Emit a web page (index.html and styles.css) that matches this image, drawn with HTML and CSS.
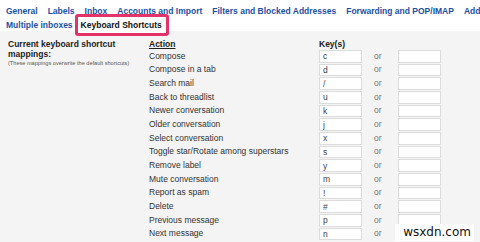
FILE: index.html
```html
<!DOCTYPE html>
<html lang="en">

<head>
    <meta charset="utf-8">
    <meta name="viewport" content="width=device-width, initial-scale=1.0">
    <title>Settings - Keyboard Shortcuts</title>

    <link rel="stylesheet" href="styles.css">

</head>

<body>

    <header class="tabs">
        <nav class="tabrow">
            <a href="#">General</a>
            <a href="#">Labels</a>
            <a href="#">Inbox</a>
            <a href="#">Accounts and Import</a>
            <a href="#">Filters and Blocked Addresses</a>
            <a href="#">Forwarding and POP/IMAP</a>
            <a href="#">Add-ons</a>
        </nav>
        <nav class="tabrow">
            <a href="#">Multiple inboxes</a>
            <span class="valgt">Keyboard Shortcuts</span>
        </nav>
    </header>

    <main class="settings">
        <div class="intro">
            <h2>Current keyboard shortcut mappings:</h2>
            <p class="note">(These mappings overwrite the default shortcuts)</p>
        </div>

        <div id="liste" class="mapping">
            <span class="head action">Action</span>
            <span class="head keys">Key(s)</span>
        </div>
    </main>

    <div class="watermark">wsxdn.com</div>

    <script>
        let genveje = [
            ["Compose", "c"],
            ["Compose in a tab", "d"],
            ["Search mail", "/"],
            ["Back to threadlist", "u"],
            ["Newer conversation", "k"],
            ["Older conversation", "j"],
            ["Select conversation", "x"],
            ["Toggle star/Rotate among superstars", "s"],
            ["Remove label", "y"],
            ["Mute conversation", "m"],
            ["Report as spam", "!"],
            ["Delete", "#"],
            ["Previous message", "p"],
            ["Next message", "n"]
        ];

        let dest = document.querySelector("#liste");
        genveje.forEach(g => {
            let template = `<span class="navn">${g[0]}</span>
                <input class="tast" type="text" value="${g[1]}">
                <span class="eller">or</span>
                <input class="tast" type="text" value="">`;
            dest.insertAdjacentHTML("beforeend", template);
        });
    </script>
</body>

</html>
```

FILE: styles.css
```css
body {
    margin: 0;
    font-family: "Liberation Sans", Arial, sans-serif;
    font-size: 8.5px;
    color: #333;
    background: #f4f4f4;
    height: 242px;
    overflow: hidden;
    position: relative;
}

.tabs {
    background: #fff;
    padding: 4px 0 0 6px;
    height: 27px;
}

.tabrow {
    display: flex;
    align-items: center;
    gap: 10px;
    height: 14px;
    white-space: nowrap;
}

.tabrow a {
    color: #1d4fa6;
    font-weight: bold;
    text-decoration: none;
}

.valgt {
    color: #111;
    font-weight: bold;
    background: #fff;
    border: 3px solid #e3336a;
    border-radius: 3px;
    padding: 0 4px 0 3px;
    margin-left: -8px;
    line-height: 16px;
    position: relative;
    z-index: 1;
}

.settings {
    display: flex;
    padding: 8px 0 0 8px;
}

.intro {
    width: 141px;
}

.intro h2 {
    margin: 0;
    font-size: 8.5px;
    line-height: 10px;
    color: #222;
}

.note {
    margin: 0;
    font-size: 5.6px;
    line-height: 8px;
    color: #555;
}

.mapping {
    display: grid;
    grid-template-columns: 170px 43px 36px 43px;
    grid-auto-rows: 13.67px;
    grid-template-rows: 10px;
    align-items: center;
}

.head {
    font-weight: bold;
    color: #222;
}

.action {
    text-decoration: underline;
}

.keys {
    grid-column: 2 / 5;
}

.navn {
    color: #333;
}

.tast {
    box-sizing: border-box;
    width: 43px;
    height: 12.67px;
    margin: 0;
    padding: 0 3px;
    border: 1px solid #dcdcdc;
    background: #fff;
    font-family: "Liberation Sans", Arial, sans-serif;
    font-size: 8.5px;
    color: #444;
    align-self: end;
}

.eller {
    color: #777;
    padding-left: 12px;
}

.watermark {
    position: absolute;
    right: 6px;
    bottom: 1px;
    background: #fff;
    padding: 1px 3px 2px 8px;
    font-family: "DejaVu Sans", sans-serif;
    font-size: 12px;
    color: #111;
}
```
